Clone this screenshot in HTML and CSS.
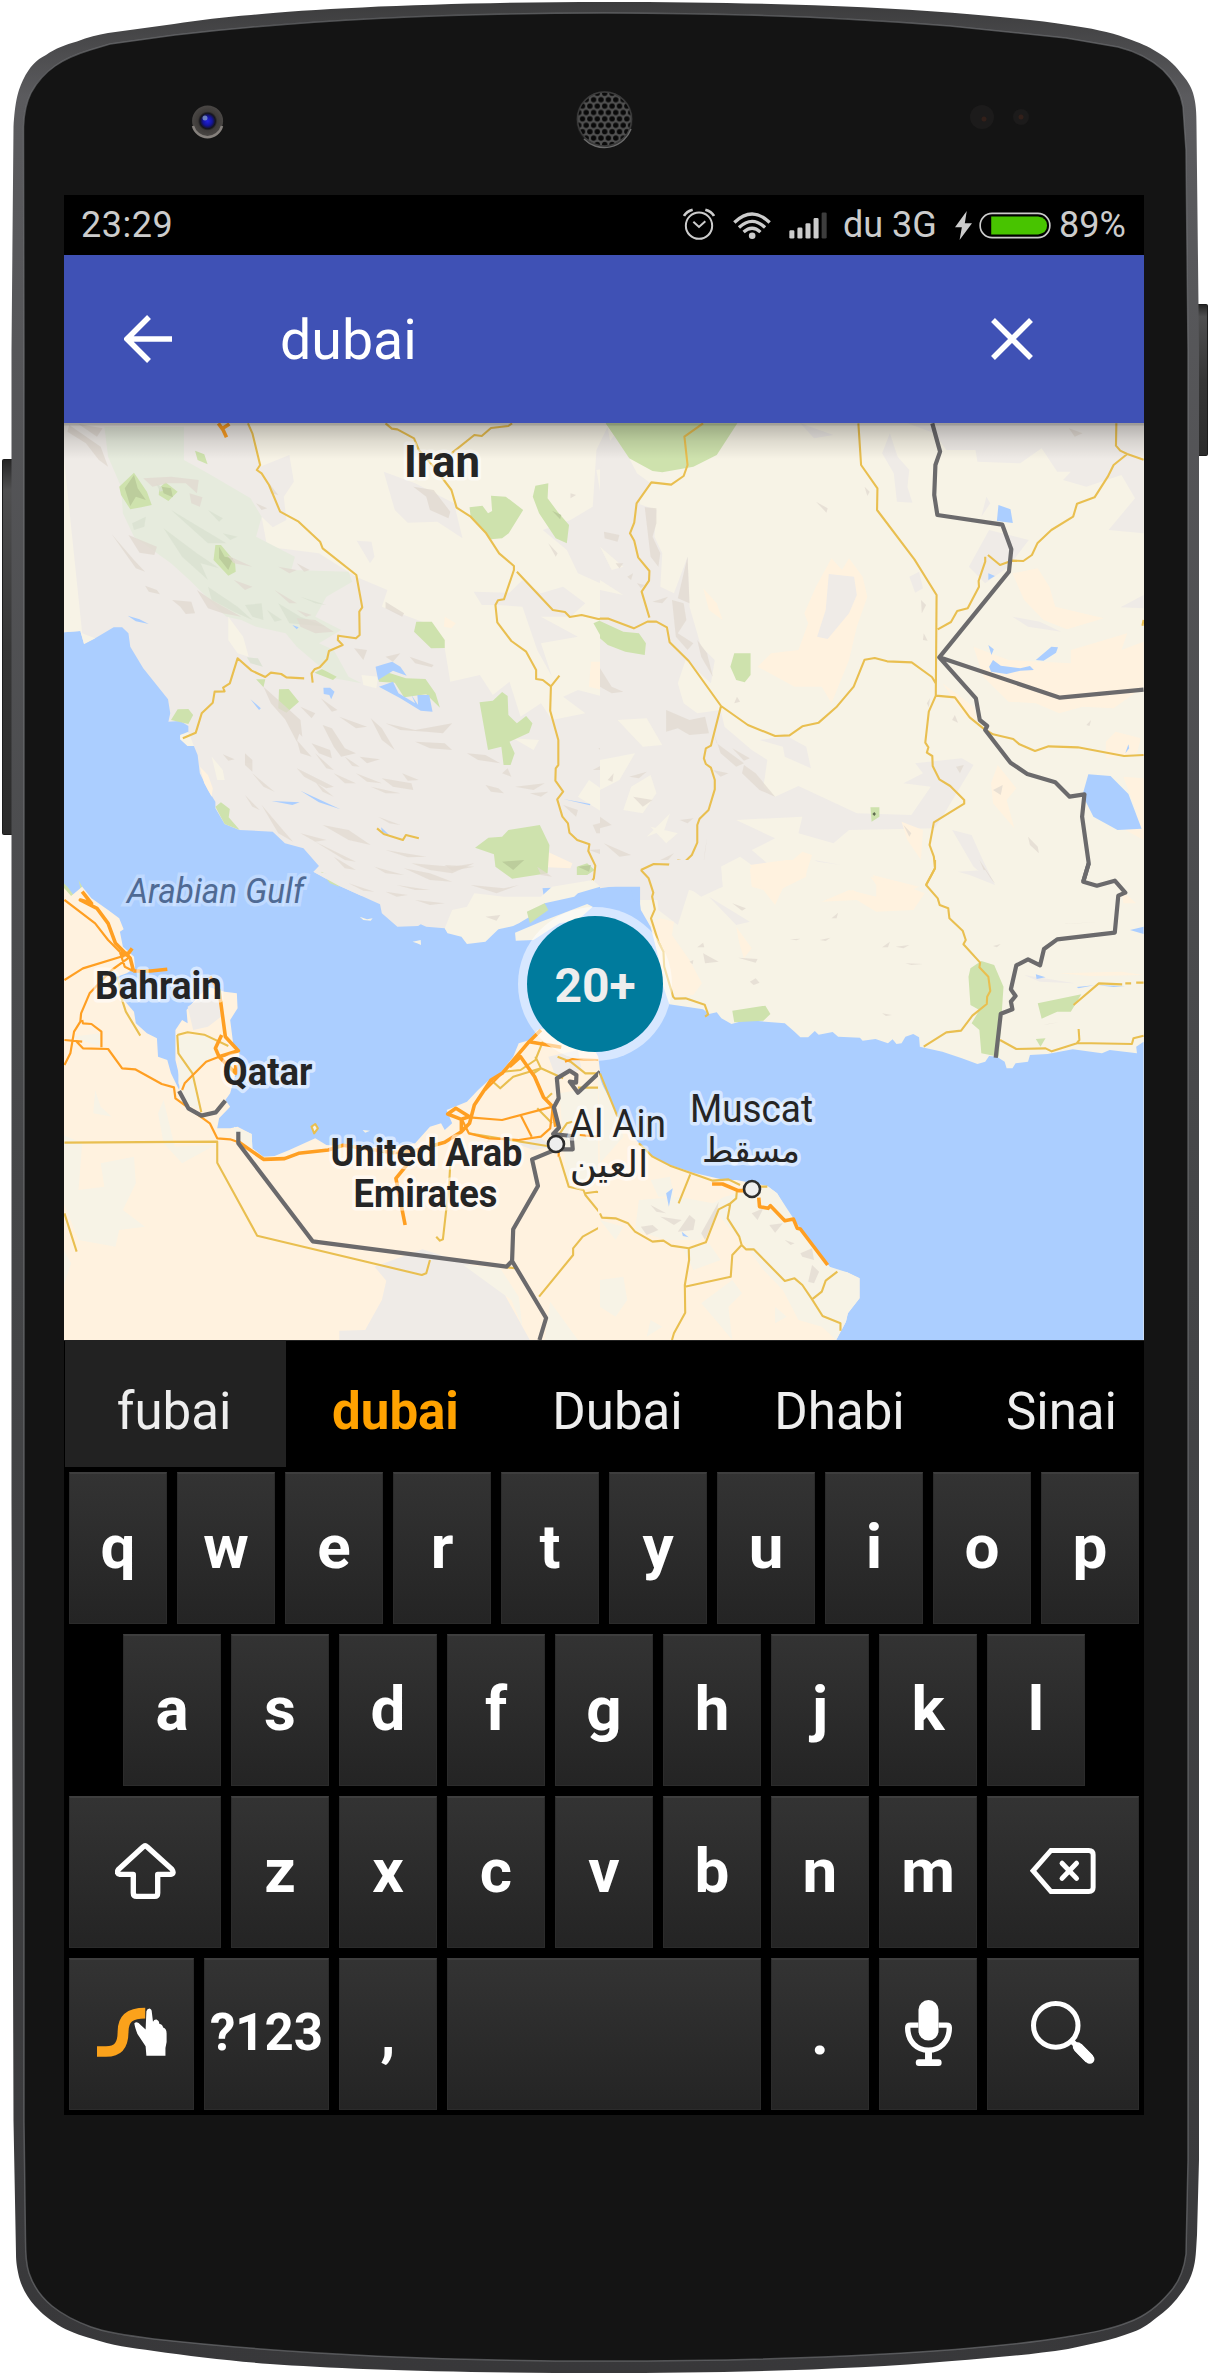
FILE: index.html
```html
<!DOCTYPE html>
<html lang="en">
<head>
<meta charset="utf-8">
<title>Map search</title>
<link rel="stylesheet" href="styles.css">
</head>
<body>
<div class="device">
  <svg class="shell" viewBox="0 0 1210 2375" aria-hidden="true">
    <defs>
      <linearGradient id="rim" x1="0" y1="0" x2="0" y2="1">
        <stop offset="0" stop-color="#3c3c3d"/><stop offset=".04" stop-color="#5b5b5e"/><stop offset=".5" stop-color="#454648"/><stop offset="1" stop-color="#38383a"/>
      </linearGradient>
      <radialGradient id="lens"><stop offset="0" stop-color="#2222e0"/><stop offset=".3" stop-color="#14149a"/><stop offset=".5" stop-color="#15151c"/><stop offset=".62" stop-color="#3e3b39"/><stop offset="1" stop-color="#4a4745"/></radialGradient>
      <linearGradient id="button" x1="0" x2="0" y2="1"><stop offset="0" stop-color="#242424"/><stop offset=".08" stop-color="#4f4f50"/><stop offset=".5" stop-color="#363636"/><stop offset="1" stop-color="#2b2b2b"/></linearGradient>
      <pattern id="mesh" width="7.4" height="12.8" patternUnits="userSpaceOnUse" x="601" y="112.5"><rect width="7.4" height="12.8" fill="#515151"/><g fill="#090909"><circle cx="3.7" cy="6.4" r="2.7"/><circle r="2.7"/><circle cx="7.4" r="2.7"/><circle cy="12.8" r="2.7"/><circle cx="7.4" cy="12.8" r="2.7"/></g></pattern>
    </defs>
    <rect x="2.500" y="459.500" width="12" height="375" rx="1" fill="url(#button)" stroke="#1c1c1c"/>
    <rect x="1196" y="304.500" width="11.500" height="151" rx="1" fill="url(#button)" stroke="#1c1c1c"/>
    <path fill="url(#rim)" d="M13.5 127C15 104 17 93 23 80C30 66 36 60 46 55C56 48 65 45 77 41.5C88 37 98 35 108 33L174 24C200 20 224 17 251 15C320 8 460 2 605 2C750 2 860 6 952 12.700C1000 17 1038 20 1068 25C1090 28 1110 32 1126 38C1140 43 1148 46 1157 52C1167 58 1174 64 1180 72C1187 80 1191 86 1193 93C1196 103 1196.500 112 1196.500 127L1199 350V2160L1197 2235C1196 2250 1196 2260 1193 2270C1190 2280 1187 2285 1182 2292C1175 2302 1168 2309 1160 2315C1151 2322 1144 2328 1133 2332C1110 2341 1090 2344 1068 2349C1030 2355 990 2358 952 2361C850 2370 720 2373 605 2373C450 2373 340 2369 270 2364C230 2361 190 2356 154 2351C132 2348 110 2345 93 2339C79 2335 68 2331 58 2325C49 2319 42 2314 35 2306C27 2297 22 2288 19 2277C17 2268 16 2262 16 2254L13.500 2121L11.500 1500V350Z"/>
    <path fill="#141414" stroke="#77787b" stroke-opacity=".6" stroke-width="1.500" d="M23.500 127C24 113 26 103 31 93C38 80 45 73 55 66C66 58 77 54 90 50L110 44L175 35C320 18 460 13 605 13C750 13 850 18 950 26L1066 38L1118 47C1138 52 1152 60 1163 70C1174 81 1181 93 1183 107L1186 150L1188 350V2160L1186 2254C1184 2270 1179 2282 1170 2292C1159 2305 1146 2316 1129 2322C1109 2330 1089 2333 1066 2337C980 2351 810 2361 605 2361C430 2361 280 2353 154 2339C130 2336 108 2333 91 2327C75 2321 63 2315 52 2306C41 2297 33 2285 29 2273C26 2264 25.500 2254 25.500 2240L24 2121V350Z"/>
    <circle cx="207.600" cy="121" r="15.500" fill="url(#lens)"/>
    <path d="M193 126a15 15 0 0 0 29 0" fill="none" stroke="#85807c" stroke-width="2.500"/>
    <circle cx="205" cy="118" r="2.500" fill="#90acd0" opacity=".7"/>
    <circle cx="604.500" cy="119.500" r="28.500" fill="#1e1e1e"/>
    <circle cx="604.500" cy="119" r="27" fill="url(#mesh)" stroke="#3c3c3c" stroke-width="1.500"/>
    <path d="M584 139a28.500 28.500 0 0 0 47-10" fill="none" stroke="#6a6a6a" stroke-width="1.500"/>
    <circle cx="982" cy="117" r="12" fill="#1c1b1b"/><circle cx="984" cy="119" r="2.500" fill="#33201a"/>
    <circle cx="1021" cy="117" r="8" fill="#1c1b1b"/><circle cx="1021" cy="117" r="2.500" fill="#33201a"/>
  </svg>

  <main class="screen">
    <header class="status">
      <span class="clock">23:29</span>
      <svg class="alarm" viewBox="66 55 96 96"><g fill="none" stroke="#ccc"><circle cx="114" cy="108" r="39.500" stroke-width="6"/><path d="M97 96l17 16 19-17" stroke-width="6"/><path d="M69 79q7-14 26-19M159 79q-7-14-26-19" stroke-width="8"/></g></svg>
      <svg class="wifi" viewBox="215 60 115 86"><g fill="none" stroke="#ccc" stroke-width="10"><path d="M219 94q54-51 107 0M233 109q40-37 79 0M247 123q26-23 51 0"/></g><circle cx="273" cy="134" r="10" fill="#ccc"/></svg>
      <svg class="signal" viewBox="383 65 113 80"><g fill="#ccc"><rect x="384" y="119" width="15" height="25" rx="4"/><rect x="408" y="111" width="15" height="33" rx="4"/><rect x="432" y="98" width="15" height="46" rx="4"/><rect x="456" y="83" width="15" height="61" rx="4"/></g><rect x="480" y="66" width="15" height="78" rx="4" fill="#3d3d3d"/></svg>
      <span class="carrier">du 3G</span>
      <svg class="bolt" viewBox="884 62 52 88"><path fill="#ccc" d="M920 62L884 111h21l-7 39 38-51h-22z"/></svg>
      <svg class="battery" viewBox="956 65 218 80"><rect x="959.500" y="68.500" width="211" height="73" rx="36" fill="none" stroke="#ccc" stroke-width="5"/><path fill="#48c400" d="M993 78H1135Q1162 82 1162 105T1135 132H993Z"/></svg>
      <span class="percent">89%</span>
    </header>

    <div class="appbar">
      <svg class="back" viewBox="0 0 48 48"><path d="M25 2L3 24l22 22M3 24H48" fill="none" stroke="#fff" stroke-width="5.500"/></svg>
      <span class="query">dubai</span>
      <svg class="clear" viewBox="0 0 42 42"><path d="M2 2L40 40M40 2L2 40" fill="none" stroke="#fff" stroke-width="5.500"/></svg>
    </div>

    <svg class="map" viewBox="64 423 1080 917">
      <rect x="64" y="423" width="1080" height="917" fill="#f7f3e6"/>

      <!-- Northern Gulf and western Iran -->
      <g transform="translate(60 420) scale(.36995 .33333)">
        <path class="hills" d="M0 0H505L541 140 620 105 632 185 605 230 612 300 575 322 545 290 560 380 700 400 800 470 885 510 870 560 990 610 1040 685 1055 785 1135 765 1170 825 1215 785 1245 890 1300 850 1330 900 1420 880 1360 830 1400 810 1470 830 1568 800V900L1510 905 1568 990V1070L1480 1120 1430 1080 1400 1130 1500 1200 1568 1210V1440H0V570L30 600 60 640Z"/>
        <path class="hills" d="M875 155L960 190 1065 250 1088 355 1020 305 940 308 905 270ZM802 362L842 365 850 410 838 430ZM1118 515L1215 518 1250 480 1300 520 1360 500 1420 550 1380 590 1300 590 1400 650 1300 670 1330 770 1290 690 1250 560 1180 555 1140 555ZM1305 330L1370 390 1400 460 1460 490 1568 490V220L1510 290 1470 280 1450 150 1500 140 1480 20 1450 90 1440 260 1380 300Z"/>
        <path class="sage" d="M120 20H335V120L400 160 515 235 545 290 530 350 635 410 625 450 780 455 790 485 720 530 690 590 760 630 700 670 740 690 780 770 815 790 740 775 640 680 610 640 530 620 490 600 450 590 350 480 300 430 200 350 170 280 165 200 130 110Z"/>
        <path class="sea" d="M0 638L55 633 65 672 95 655 145 622H168L185 640 190 680 225 745 265 800 292 838 298 880 293 905 325 903 347 918V940L325 945V958L345 978H362L372 1005 378 1060 400 1110 420 1145V1165L445 1212 485 1230 575 1235 608 1270 658 1285 700 1338 685 1355 750 1395 850 1445H0Z"/>
        <path class="cream" d="M0 555L40 610 60 640 95 655 65 672 55 633 0 638ZM325 945L347 935 362 978H345L325 958ZM455 590L495 650 510 710 480 700 455 660ZM815 765L860 770 855 805 820 795ZM1225 955L1295 960 1280 990ZM410 1010L440 1050 445 1080 425 1080Z"/>
        <path class="desert" d="M378 1040L400 1065 413 1105 410 1130 390 1090ZM1318 1295L1385 1330 1380 1345 1318 1342ZM1040 590L1070 610 1058 625 1038 620ZM1435 725H1465L1468 790 1530 800 1500 820 1430 800Z"/>
        <path class="park" d="M160 200L200 158 235 215 248 255 220 262 190 268 165 225ZM268 205L285 187 318 215 293 243 267 225ZM365 92L390 103 399 133 372 120ZM420 375H435L473 425 475 455 455 467 415 420ZM1107 262L1142 257 1157 280 1168 273 1165 227 1205 230 1252 270 1213 340 1195 355 1165 358 1140 325 1110 290ZM1285 197L1320 190 1318 235 1345 275 1376 315 1370 370 1340 355 1295 280 1278 230ZM1475 10H1568V130L1540 110ZM963 605H1005L1040 660V684L1003 685 957 635ZM1442 610L1462 600 1568 640V703L1510 692 1470 665ZM688 758L708 747 748 770 738 780ZM530 778L555 778 550 802ZM592 808L618 807 646 845 612 878 590 865ZM300 900L318 868 347 867 360 885 347 912ZM860 770L880 755 935 775 988 777 1015 820 1027 863 990 823 930 832 905 788 862 785ZM1134 847L1170 842 1195 816 1210 828 1212 885 1235 910 1260 888 1277 910 1268 938 1215 965 1229 1000 1218 1035H1199L1193 980 1157 990ZM420 1160L435 1147 459 1167 456 1192 486 1230 445 1212ZM1122 1283L1158 1253 1195 1250 1212 1230 1297 1215 1323 1275 1318 1360 1222 1376 1177 1340 1173 1303ZM705 1355L740 1370 755 1400 730 1390ZM1397 1340L1425 1330 1445 1350 1425 1365H1397Z"/>
        <path class="sea" d="M853 740L875 733 898 725 920 740 937 767 900 752 860 780ZM862 800L900 785 915 820 960 850 950 825 968 855 966 825 998 825 1007 875 975 872 920 835ZM712 803L730 803 742 815 733 838 728 825 713 822ZM183 587L215 598 240 612 205 604ZM515 838L543 865 538 870ZM572 1143L648 1147 628 1155ZM650 1112L758 1168 700 1147ZM868 1222L890 1245 870 1235ZM1360 1137L1434 1152 1432 1156ZM628 615L645 622 640 628Z"/>
        <path class="mint" d="M280 325L370 400 430 445 380 430 400 480 330 410ZM300 270L390 330 450 370 400 370ZM195 310L232 290 228 320 200 330ZM400 500L480 560 520 600 470 575 410 540ZM500 555L545 550 550 600 520 590ZM590 550L650 590 720 620 620 610ZM650 530L720 555 690 550ZM505 712L535 715 548 740 515 730ZM300 350L350 410 340 420ZM400 270L440 295 430 305ZM440 340L480 350 460 360ZM560 570L600 600 580 605ZM260 190L285 210 270 215Z"/>
        <path class="moss" d="M175 205L200 165 210 205 232 240 205 230 190 258ZM275 200L300 205 305 232 280 220ZM430 380L445 410 468 415 455 450 430 415ZM1330 272L1355 285 1352 298ZM1195 1325L1255 1320 1225 1350ZM1400 1340L1435 1335 1430 1355Z"/>
        <g class="rock">
          <path d="M25 15L110 80 130 140 105 120 70 70 20 35ZM50 12L115 25 100 50ZM225 175L300 170 375 180 370 220 340 190 290 190 250 200ZM350 220L385 232 378 260 355 250ZM140 343L200 420 230 455 205 445 170 390ZM185 345L262 380 255 405 215 398ZM230 497L262 510 270 523 240 515ZM303 540L355 545 365 580 340 582 325 560ZM370 510L410 540 490 590 440 580 400 565ZM450 405L520 440 470 430ZM470 480L520 500 500 510ZM530 250L560 265 545 270ZM565 190L590 225 570 220ZM955 200L1010 210 1055 275 1050 295 1000 270 990 230ZM640 595L690 600 740 635 690 640 650 620ZM880 545L930 580 925 590 880 565ZM795 685L830 690 820 720ZM880 710L920 700 900 725ZM945 710L1010 735 1005 742 960 730ZM640 570L680 585 665 590ZM580 510L640 550 620 550ZM590 440L640 450 620 460ZM640 430L675 450 660 455Z"/>
          <path d="M550 800L600 850 650 900 655 950 610 900 570 850ZM600 880L650 930 640 965ZM650 860L690 880 680 895ZM705 835L750 870 735 875ZM755 890L830 920 800 925ZM710 915L735 925 770 985 800 1000 760 1010 740 980ZM840 895L870 925 905 990 870 960ZM880 910L960 930 1060 910 1035 940 990 935 920 930ZM960 965L1040 970 1060 990 1000 985ZM680 970L730 990 735 1015 700 1000ZM810 1010L865 1018 830 1030ZM640 960L680 1010 650 1000ZM870 1075L950 1090 955 1110 900 1100ZM690 1000L740 1050 720 1045ZM500 1000L520 1020 520 1055 500 1035ZM440 1003L472 1018 455 1022ZM520 1060L580 1115 550 1100ZM640 1045L740 1100 720 1105 660 1070ZM740 1060L800 1090 770 1090ZM500 1125L540 1170 520 1160ZM545 1155L610 1240 630 1265 590 1240ZM690 1085L740 1130 710 1115ZM710 1215L780 1230 840 1275 780 1260ZM860 1190L920 1215 890 1210ZM800 1060L870 1090 830 1085ZM840 1100L920 1120 880 1120ZM925 1060L970 1080 940 1082ZM770 1010L810 1040 790 1038ZM650 1240L720 1260 690 1265ZM690 1265L800 1325 770 1320ZM740 1310L800 1350 770 1345ZM880 1290L990 1310 940 1312ZM950 1330L1060 1340 1120 1330 1060 1360 1000 1350ZM850 1340L930 1365 880 1360ZM850 1400L940 1410 1000 1430 930 1425ZM1050 1385L1190 1410 1110 1410ZM1100 1000L1150 1005 1190 1030 1130 1020ZM1150 1095L1185 1105 1200 1120 1165 1115ZM1230 1100L1310 1090 1280 1110ZM1270 1120L1320 1115 1300 1130ZM1360 1155L1400 1170 1395 1190ZM1440 1215L1490 1200 1480 1240 1450 1240ZM1455 985L1485 980 1470 1000ZM1440 1050L1490 1020 1470 1050ZM1485 1090L1510 1065 1500 1095ZM1470 330L1510 345 1500 365 1470 355ZM1540 850L1560 820 1568 840ZM1430 1290L1500 1285 1480 1310ZM1210 1045L1220 1070 1195 1060ZM1410 1420L1460 1410 1430 1430ZM1320 370L1345 400 1340 410ZM1380 220L1395 225 1380 235Z"/>
        </g>
        <path class="road" d="M508 10L520 40 541 135 532 150 545 160 565 195 595 275 645 305 703 365 710 385 801 465 817 562 809 575 810 645 800 655 752 647 751 660 764 675 727 693 722 718 702 742 688 748 680 760 683 788M332 955L367 938 383 880 413 848 418 815 445 814 441 803 459 790 480 715 518 752 555 771 570 758 598 762 612 772 660 775M880 10L897 26 912 28 957 55 970 90 1010 140 1058 210 1072 263 1110 290 1152 340 1187 400 1227 438V450L1200 538 1184 541 1177 555 1182 607 1220 663 1260 695 1287 750V777L1305 780 1327 799 1350 767M1327 799L1325 872 1347 960V1035L1340 1045 1339 1082 1360 1115 1344 1138 1358 1190 1373 1210 1377 1238 1398 1260 1431 1273 1428 1293 1447 1337 1443 1375 1424 1407 1393 1420M1235 455L1332 570 1365 576 1378 591 1410 585 1455 597 1480 595M1058 100L1120 45 1140 48 1165 24 1212 18 1222 10M857 1225L875 1242 927 1260 935 1245 970 1255"/>
        <path class="highway" d="M428 10L440 28 450 52M440 25L458 12"/>
      </g>

      <!-- Eastern Iran and its borders -->
      <g transform="translate(600 420) scale(.38911 .33333)">
        <path class="hills" d="M0 150L15 80 40 40 75 115 95 160 130 190 95 250 145 270 140 350 160 400 155 500 190 520 225 410 230 560 260 680 295 720 285 790 220 720 200 790 215 850 250 880 310 870 320 920 390 990 430 1020 420 1100 450 1130 510 1098 660 1180 800 1185 850 1100 780 1090 830 1060 810 1030 930 1015 960 1035 880 1190 860 1225 640 1230 600 1270 510 1240 520 1190 350 1200 450 1255 390 1290 440 1340 390 1335 360 1310 310 1340 315 1400 260 1420 200 1400 170 1440H0ZM410 960L480 948 530 980 542 1045 475 1010 470 980ZM515 10L600 45 550 55ZM725 100L745 40 765 110 795 150 790 200 803 248 763 245 755 160ZM790 10H1397V340L1307 330 1375 235 1340 165 1250 200 1190 180 1210 155 1175 155 1135 85 1080 130 970 125 965 90 890 90 860 40ZM1000 330L1102 360 1050 440 990 490 948 440ZM795 470L820 455 830 505 810 518ZM980 290L993 230 1003 250ZM1060 590L1130 605 1185 635 1100 620ZM1338 562L1397 525V565ZM905 1230L955 1245 980 1310 1015 1395 960 1340Z"/>
        <path class="cream" d="M45 900L120 895 160 975 110 980ZM80 1100L130 1065 145 1120 110 1180 60 1170ZM0 1020L90 1000 50 1080 0 1110ZM120 1250L180 1180 165 1230ZM0 380L60 440 30 450ZM0 480L60 525 0 510ZM130 1220L200 1240 170 1270Z"/>
        <path class="desert" d="M595 415L622 450 640 415 675 470 687 530 660 620 640 720 595 850 570 800 500 800 405 740 440 700 510 690 535 610 525 580 555 500ZM1060 460L1125 445 1155 500 1170 560 1295 595 1200 628 1140 600 1090 540ZM960 680L1050 720 1210 730V690L1355 640 1340 690 1397 665V800L1320 865 1240 860 1180 880 1120 850 1050 845 985 770ZM880 790L960 860 970 900 940 890ZM1300 965L1325 935 1390 955 1380 1000 1300 1015ZM1345 1070L1397 1075V1260L1350 1230 1380 1180ZM1022 1035L1070 1105 1045 1140 1065 1225 1010 1150 1005 1090ZM265 505L300 550 315 600 280 570ZM775 1205L830 1230 825 1320 790 1260ZM385 1345L480 1335 520 1295 545 1305 530 1360 470 1400 450 1440 420 1410 390 1400ZM700 1365L820 1400 780 1420 720 1395ZM580 1440L650 1410 700 1440Z"/>
        <path class="hills" d="M588 462L653 470 660 525 640 580 585 657 558 650 580 570Z"/>
        <path class="park" d="M15 10H353L300 105 240 140 160 157 135 153 75 115ZM345 700H387V765L372 787 350 780 335 740ZM0 603L60 635 100 640 118 670 115 705 65 695 20 675 0 655ZM695 1162H718V1190L698 1205Z"/>
        <path class="sea" d="M1024 255L1055 268 1061 309 1020 303ZM998 460L1015 468 998 480ZM998 675L1012 688 1006 705ZM1000 740L1010 720 1030 737 1080 745 1105 738 1115 750 1080 752 1045 762 1005 755ZM1120 720L1160 680 1177 682 1172 698 1140 722ZM1255 1063L1312 1068 1358 1122 1392 1226 1330 1230 1268 1190 1240 1125ZM1350 1000L1358 973 1360 985ZM0 1402L78 1412 85 1440H0Z"/>
        <g class="rock"><path d="M115 262L145 265V310L135 350 155 400 150 440 130 410ZM10 335L50 345 45 365 12 355ZM555 245L585 265 582 278ZM185 540L215 550 222 600 200 640 240 670 225 690 195 650ZM225 410L230 550 200 535ZM135 545L175 530 160 550ZM250 660L275 700 290 770 260 710ZM170 870L230 900 270 890 280 940 230 945 200 925 170 935ZM290 930L300 970 370 1030 350 1040 310 1000ZM340 985L385 1015 370 1022ZM370 1035L400 1060 450 1130 410 1110 365 1060ZM0 745L30 800 60 815 30 820 0 800ZM75 1070L120 1055 100 1075ZM85 1130L135 1140 110 1160ZM10 1270L80 1305 50 1310ZM0 1190L30 1215 0 1225ZM205 1200L240 1195 225 1210ZM155 1320L190 1300 175 1320ZM275 1255L265 1340 270 1290ZM20 1080L35 1060 32 1085ZM1010 1110L1035 1095 1030 1125ZM1100 1250L1125 1280 1128 1300 1105 1275ZM915 1040L935 1035 925 1060ZM780 1215L800 1240 795 1250ZM975 1320L1015 1390 990 1360ZM1205 25L1240 40 1220 50ZM680 200L693 215 687 228ZM825 540L838 555 827 580ZM832 640L842 662 830 660ZM905 900L912 885 920 908ZM1250 915L1262 900 1258 918ZM840 850L848 835 845 862ZM70 470L85 460 80 480ZM95 490L115 495 105 505ZM40 430L60 430 50 445ZM290 1050L330 1060 310 1070ZM345 850L352 830 360 845Z"/></g>
        <path class="road" d="M265 10L217 50 225 135 215 168 183 194 132 187 94 250 88 308 77 340 88 362 98 412 127 453 126 482 107 515 127 593M0 596H22L87 625 122 605H145L172 622 179 667 228 723 311 858 380 915 450 948 487 946 520 919 562 908 607 862 652 800 680 719 706 714 738 724 801 727 853 771 863 790M664 10L671 135 713 205 712 270 808 418 865 525 863 827 845 875 836 968 844 982 840 998 854 1008 855 1038 872 1078 900 1098 936 1140V1151L858 1207 847 1275 858 1310 861 1345 838 1395M863 827L912 832 950 892 985 925 1010 943 1062 957 1078 973 1118 993 1153 979 1228 982 1347 1008 1397 1005M1327 10L1326 77 1337 92 1355 102 1397 119M1355 102L1320 135 1305 170 1271 232 1226 251 1216 290 1160 330 1124 370 1110 405 1088 423 1058 422 1028 435 997 405M990 410V425L973 483 974 500 945 565 918 573 902 606 868 628M311 858L285 977 272 985 267 1015 272 1032 285 1043 295 1080V1108L279 1170 256 1196 250 1215V1268L236 1305 218 1325 200 1322 185 1334 138 1332 105 1350M1397 600L1394 617"/>
        <path class="border" d="M854 10L874 95 862 135 859 225 867 285 1034 314 1057 388 1051 455 872 712 1182 833 1397 809M872 712L966 835 976 900 995 918 990 930 1055 1028 1098 1062 1170 1087 1207 1130 1245 1123 1239 1190 1256 1330 1242 1385"/>
        <path d="M700 1182l5-6 4 6-4 6z" fill="#5e6b50"/>
      </g>

      <!-- Southern Gulf, Qatar and the Emirates -->
      <g transform="translate(60 860) scale(.36995 .33333)">
        <path class="sea" d="M0 110H750L1400 80H1568V1480H0Z"/>
        <path class="hills" d="M685 35L750 75 865 133 870 160 912 200 968 198 975 193 990 200 1040 205 1048 220 1150 160 1240 190 1310 130 1300 50 1200 60 800 50Z"/>
        <path class="cream" d="M1040 205L1048 220 1085 230 1100 252 1150 245 1185 208 1225 198 1240 190 1270 170 1262 155 1310 130 1390 110 1400 100 1460 80 1440 60 1330 80 1300 110 1200 110 1120 100 1100 140 1060 150ZM1230 218L1300 185 1425 132 1440 140 1400 180 1350 190 1280 240 1232 242ZM810 170L830 178 845 175 840 182 820 180ZM953 245L975 240 976 255 965 250ZM818 810L838 812 825 818ZM680 800L690 792 697 805 687 820Z"/>
        <path class="park" d="M1262 155L1310 130 1320 150 1270 190ZM0 60L20 80 40 110 60 105 50 60 60 80 85 130 30 130 0 110Z"/>
        <path class="desert" d="M0 70L30 108 60 80 85 115 130 150 160 175 172 208 162 215 170 260 200 290 203 325 180 340 155 350 165 410 200 455 205 490 235 520 262 535 265 590 290 600 300 640 322 690 325 660 312 600V510L330 480 345 490 342 450 365 420 400 380 445 395 478 400 480 445 460 480 468 550 485 580 480 620 460 700 447 720 460 740 430 775 425 805 460 805 480 800 518 822 520 865 550 890 580 888 620 870 690 835 720 855 800 862 880 862 960 850 1000 800 1030 790 1040 810 1060 790 1045 750 1100 725 1130 690 1165 655 1190 640 1225 590 1240 550 1270 540 1290 510 1400 480 1455 590 1460 635 1470 680 1505 770 1568 860V1480H0Z"/>
        <path class="hills" d="M345 440L400 400 430 410 435 470 400 500 360 510ZM850 1220L980 1168 1110 1215 1195 1250 1205 1310 1270 1440H755V1412L825 1410 870 1320 882 1262ZM1230 850L1300 835 1330 860 1280 870ZM1320 590L1400 570 1410 630 1340 650Z"/>
        <path class="cream" d="M0 820L60 850 50 990 120 980 110 910 200 890 205 970 170 1050 230 1100 160 1110 150 1160 50 1140 0 1000ZM95 690L110 740 140 770 90 760ZM280 720L310 860 420 855 330 910 280 850 265 760ZM320 530L400 525 440 570 400 600 360 650 380 750 345 735 320 670ZM1090 1215L1190 1225 1240 1310 1250 1400 1220 1320ZM1350 700L1450 680 1500 770 1500 900 1440 960 1370 970ZM1510 1040L1568 1080V1150ZM1325 1325L1310 1440H1400ZM0 1150L30 1210 0 1310ZM30 530L110 520 110 560ZM1480 1220L1568 1170V1190ZM470 800L518 822 520 865 480 850Z"/>
        <path class="rock" d="M930 25L1000 40 1060 65 1000 60ZM1040 15L1120 20 1060 32ZM910 75L1000 90 960 90ZM780 70L850 95 820 92ZM1110 75L1200 85 1240 75 1180 100ZM1150 170L1190 165 1180 182ZM960 120L1040 130 1000 135ZM1290 20L1330 50 1300 45ZM880 95L940 105 910 110ZM1380 250L1400 240 1420 250Z"/>
        <path class="road" d="M12 848L425 845V908L533 1127 978 1245 990 1240 1000 1200M12 1060L45 1175M317 525L345 517 390 524 455 558M317 525L320 580 358 640 382 757M155 350L165 410 178 455 217 527M1055 910L1052 970 1035 1138 1027 1142 1017 1130M1350 890L1375 980 1415 990 1420 1005 1470 1073 1505 1077 1535 1090 1568 1125M1420 1000L1450 995 1490 1005 1495 980M1478 1090L1413 1130 1387 1165V1185L1295 1310M1165 660L1190 685 1225 650 1300 625 1360 655M1305 545L1285 600 1245 630 1200 635M1465 660L1505 770M1460 683H1400M1285 590L1300 625 1280 640M1345 590L1380 605 1420 640 1460 640M1105 820L1300 855 1330 860M1290 745L1330 790M1330 700L1310 720M1345 830L1370 790 1385 785M1195 1220L1230 1225M680 800L690 792 697 805 687 820Z"/>
        <path class="highway thin" d="M12 120L95 190 130 240 175 290M12 360L62 325 180 285M12 540L60 545M190 290L140 330 80 400 57 460 55 485 38 515 28 580 12 615M60 480L62 490 85 492 112 515V562M45 545L62 565 130 567 168 625 203 628 275 672 308 682 312 715 405 790 425 835 460 838 490 850M160 270L175 320 198 333M330 690L337 670 395 605 430 590M1085 775L1105 820 1160 835 1240 840 1300 830 1325 805 1332 740 1195 780 1107 772M1245 765L1275 830M1405 825L1450 830 1500 780 1568 740M1365 605L1385 597 1455 600M1348 868V890M1150 690L1230 600"/>
        <path class="highway" d="M60 95L85 130 55 120 100 145 130 190 150 250 190 295 198 330M165 280H185L195 265M198 333H245L290 328M405 350L430 390 447 530 482 572 430 590 420 565 437 525M430 590L475 640V615M482 845L550 898 607 896 645 880 725 870 765 856 900 878 960 872 1040 847 1085 815 1107 790 1120 735 1165 660 1195 640 1268 545 1355 562M1107 770L1070 745 1048 762 1085 778ZM1215 620L1245 590 1283 650 1307 712 1332 740 1340 800M1085 778L1085 815M945 905L908 955 933 1095M1268 545L1300 510"/>
        <path class="border" d="M322 693L347 745 382 767 421 757 447 722M482 815V850L683 1144 1207 1220 1222 1203 1225 1108 1292 978 1276 898 1341 868H1386L1383 828 1333 822 1349 803 1335 742 1348 715 1343 655 1378 632 1396 645 1395 668 1378 665 1400 698 1460 635M1222 1203L1314 1374 1296 1440"/>
      </g>

      <!-- Gulf of Oman -->
      <g transform="translate(600 860) scale(.38911 .33333)">
        <path class="sea" d="M0 85L80 92 88 123 102 125 105 150 130 200 150 290 160 370 178 433 265 448 280 462 300 457 312 475 338 492 375 480 475 490 500 515 515 532H535L552 513 562 524 598 516 612 530 668 533 675 542 708 537 740 550 752 538 762 552 775 550 785 530 805 522 820 532 822 560 880 575 930 595 970 612 990 605 1000 588 1020 590 1040 605 1045 625H1060L1068 610 1100 605 1105 585 1150 582 1215 568 1290 580 1310 570 1380 580 1378 560 1397 545V1440H0Z"/>
        <path class="desert" d="M-5 635L10 690 45 770 100 850 135 890 180 915 240 938 320 960H350L430 978 455 1000 475 1040 505 1090 590 1220 610 1237H635L667 1255V1315L637 1360 632 1385 607 1440H-5Z"/>
        <path class="cream" d="M-5 650L40 750 60 830 0 910ZM100 1020L200 1010 290 1030 320 1010 430 978 455 1000 505 1090 590 1220 635 1237 667 1255V1315L637 1360 632 1385 607 1440 570 1400 510 1380 470 1290 420 1230 370 1150 300 1060 260 1140 170 1140 90 1110ZM215 1170L280 1150 310 1200 240 1230ZM260 1330L340 1260 365 1300 330 1340 340 1440 290 1370ZM0 1260L60 1250 70 1320 40 1370 0 1340ZM130 960L180 950 190 1010 150 1010ZM130 1380L160 1400 120 1430ZM0 1080L60 1100 40 1140ZM450 1340L480 1370 450 1390Z"/>
        <path class="hills" d="M180 0H310L315 80 260 110 230 85 200 195 150 150 145 80 170 60ZM280 110L385 185 350 195ZM920 35L990 30 1015 75 950 45ZM0 0H105L90 70 0 85ZM550 0L620 15 560 5ZM1090 345L1220 370 1130 365Z"/>
        <path class="desert" d="M130 190L155 175 190 185 185 225 230 300 262 370 240 405 195 410 170 350 150 290ZM385 15L480 0 530 0 530 50 470 85 450 135 420 90ZM570 125L640 90 710 110V75L695 50 790 80 835 100 805 150 710 155 660 120ZM350 200L390 265 370 295 358 250ZM1340 90L1378 130 1345 130ZM1180 340L1340 335 1397 345 1260 348Z"/>
        <path class="park" d="M952 325L980 303 1013 315 1037 380 1025 590 980 580 975 510 955 490 975 450 952 435 947 350ZM340 452L425 437 438 462 420 482 345 487ZM1125 430L1237 403 1210 455 1175 455 1135 476ZM1120 537L1145 535 1132 560Z"/>
        <path class="sea" d="M1362 210L1397 200V222ZM1120 343L1145 352 1122 357ZM1225 381L1270 376 1230 385ZM1280 376L1350 378 1320 381ZM170 1000L187 985 177 1040ZM210 1115L228 1132 213 1128Z"/>
        <path class="rock" d="M105 1100L135 1095 150 1110 120 1125ZM155 1070L210 1080 190 1095ZM230 1065L245 1080 240 1110 200 1115ZM260 1120L305 1025 300 1060 270 1140ZM130 1035L170 1060 145 1055ZM390 1060L420 1045 405 1080ZM435 1095L470 1090 450 1118ZM515 1180L545 1165 550 1200 520 1190ZM545 1215L563 1235 550 1270 535 1265ZM475 1140L500 1150 490 1155ZM265 280L305 305 270 310ZM355 293L405 297 400 308ZM725 262L745 245 740 262ZM760 260L795 255 780 265ZM385 365L400 355 410 368 395 375ZM250 262L265 248 268 262ZM595 175L612 158 608 175ZM565 240L592 233 580 243ZM725 460L750 465 735 468ZM340 130L375 145 365 152ZM785 310L830 312 800 315ZM1140 495L1180 487 1150 492ZM1190 192L1280 187 1220 190ZM1010 258L1030 252 1020 262ZM488 238L515 236 505 241ZM230 305L240 300 238 313Z"/>
        <path class="road" d="M861 0V25L838 75 868 115 873 135 895 145 898 175 932 212 940 240 934 253 977 308 975 322 998 350 1003 393 995 410 994 432 957 467 928 512 890 517 832 560M105 30L125 55 137 98 134 110 141 148 131 175 150 245 163 275 165 320 188 410 193 416 220 415 269 434 278 463 270 470M1028 540L1070 567 1145 565 1161 574 1228 549 1367 552 1371 535 1397 527M1230 507L1232 540 1225 550M1217 435L1282 370 1342 373M1350 370H1365M1378 368H1397M0 1060L5 1073 40 1075 72 1090 90 1115 135 1145 163 1142 183 1157 228 1165 272 1147 305 1048 335 1030 350 1015 352 990M228 1165L229 1200 218 1275 219 1358 190 1420 185 1440M218 1280L336 1250 340 1185 364 1155 375 1168H395L475 1263 500 1255 520 1275 545 1318 572 1368 618 1390V1412M545 1318L570 1295 580 1262 610 1235M364 1155L358 1130 328 1075 335 1030M0 640L45 770M100 850L135 890 180 917 290 962 330 958 360 975M232 943L202 1030M410 980H430"/>
        <path class="highway" d="M288 972H315L355 992H370M408 1013L410 1040 432 1045 438 1037 475 1082 497 1077 507 1105 515 1107 585 1215"/>
        <path class="border" d="M1256 10L1242 65 1277 77 1323 62 1350 98 1332 107 1323 218 1175 238 1141 267 1131 316 1100 298 1070 316 1056 388 1068 408 1056 425 1060 448 1030 461 1017 593"/>
      </g>

      <g class="halo bold">
        <text x="404" y="477" font-size="45" textLength="76" lengthAdjust="spacingAndGlyphs">Iran</text>
        <text x="95" y="999" font-size="38" textLength="127" lengthAdjust="spacingAndGlyphs">Bahrain</text>
        <text x="222.500" y="1085" font-size="38" textLength="90" lengthAdjust="spacingAndGlyphs">Qatar</text>
        <text x="330.500" y="1166" font-size="38" textLength="192" lengthAdjust="spacingAndGlyphs">United Arab</text>
        <text x="353.500" y="1207" font-size="38" textLength="144" lengthAdjust="spacingAndGlyphs">Emirates</text>
      </g>
      <text class="water" x="127" y="902.500" font-size="35" textLength="177" lengthAdjust="spacingAndGlyphs">Arabian Gulf</text>
      <g class="halo">
        <text x="570" y="1137" font-size="38" textLength="96" lengthAdjust="spacingAndGlyphs">Al Ain</text>
        <text x="690" y="1122" font-size="38" textLength="123" lengthAdjust="spacingAndGlyphs">Muscat</text>
        <text class="arabic" x="609" y="1177" font-size="37">العين</text>
        <text class="arabic" x="751" y="1162" font-size="34">مسقط</text>
      </g>
      <g fill="#eee" stroke="#2d2d2d" stroke-width="2.600"><circle cx="556" cy="1144" r="8"/><circle cx="752" cy="1189" r="8"/></g>

      <circle cx="595" cy="984" r="77" fill="#fff" fill-opacity=".52"/>
      <circle cx="595" cy="984" r="68" fill="#007b9d"/>
      <text class="count" x="595" y="1001.500" font-size="48" text-anchor="middle">20+</text>
    </svg>

    <section class="keyboard">
      <div class="suggestions">
        <span class="word pressed">fubai</span><span class="word best">dubai</span><span class="word">Dubai</span><span class="word">Dhabi</span><span class="word">Sinai</span>
      </div>
      <div class="keys">
        <div class="row"><b class="key">q</b><b class="key">w</b><b class="key">e</b><b class="key">r</b><b class="key">t</b><b class="key">y</b><b class="key">u</b><b class="key">i</b><b class="key">o</b><b class="key">p</b></div>
        <div class="row home"><b class="key">a</b><b class="key">s</b><b class="key">d</b><b class="key">f</b><b class="key">g</b><b class="key">h</b><b class="key">j</b><b class="key">k</b><b class="key">l</b></div>
        <div class="row">
          <b class="key wide"><svg class="shift" viewBox="295 168 160 148" preserveAspectRatio="none"><path fill="none" stroke="#fff" stroke-width="14" stroke-linejoin="round" d="M369 178Q374 173 379 178L444 237Q452 249 441 251H407V300Q407 309 399 309H352Q343 309 343 300V251H308Q297 249 304 238Z"/></svg></b>
          <b class="key">z</b><b class="key">x</b><b class="key">c</b><b class="key">v</b><b class="key">b</b><b class="key">n</b><b class="key">m</b>
          <b class="key wide"><svg class="erase" viewBox="1101 182 173 121" preserveAspectRatio="none"><g fill="none" stroke="#fff" stroke-width="13"><path d="M1156 188.500H1255Q1266.500 188.500 1266.500 200V286Q1266.500 296.500 1255 296.500H1156L1109 242Z"/><path d="M1185 222L1223 262M1223 222L1185 262" stroke-linecap="round"/></g></svg></b>
        </div>
        <div class="row">
          <b class="key mid"><svg class="swype" viewBox="249 602 180 134" preserveAspectRatio="none"><path d="M249 719H272C306 719 316 698 316 667C316 632 334 618 373 618" fill="none" stroke="#fba21b" stroke-width="28"/><path fill="#fff" d="M376 613Q378 606 384 606Q390 607 390 616L393 641Q396 634 402 635Q410 638 409 646Q418 648 419 656Q428 658 428 672V694L425 710V730H376L374 705 353 673Q346 655 345 645Q352 637 362 650L374 661Z"/></svg></b>
          <b class="key mid symbols">?123</b>
          <b class="key">,</b>
          <b class="key space"></b>
          <b class="key">.</b>
          <b class="key"><svg class="mic" viewBox="776 582 122 174" preserveAspectRatio="none"><g fill="#fff"><rect x="811" y="582" width="52" height="107" rx="26"/><rect x="828" y="714" width="18" height="30"/><rect x="804" y="738" width="67" height="18" rx="8"/></g><path fill="none" stroke="#fff" stroke-width="14" d="M811 648H790Q783 648 783 655C783 693 808 714 837 714C866 714 891 693 891 655Q891 648 884 648H863"/></svg></b>
          <b class="key wide"><svg class="find" viewBox="1104 586 168 168" preserveAspectRatio="none"><g fill="none" stroke="#fff"><circle cx="1168" cy="650" r="57.500" stroke-width="13"/><path d="M1206 688L1222 704" stroke-width="14"/><path d="M1225 707L1255 738" stroke-width="26" /><path d="M1224 706L1256 739" stroke-width="24" stroke-linecap="round"/></g></svg></b>
        </div>
      </div>
    </section>
  </main>
</div>
</body>
</html>
```
FILE: styles.css
```css
* { box-sizing: border-box; }
body { margin: 0; background: #fff; font-family: Roboto, "Liberation Sans", sans-serif; }
svg { display: block; flex: none; }

.device { position: relative; width: 1210px; height: 2375px; padding: 195px 66px 0 64px; overflow: hidden; }
.shell { position: absolute; inset: 0; width: 1210px; height: 2375px; }
.screen { position: relative; width: 1080px; height: 1920px; background: #000; overflow: hidden; }

.status { display: flex; align-items: center; height: 60px; padding: 0 18px 0 17px; color: #ccc; font-size: 36px; line-height: 62px; }
.clock { margin-right: auto; letter-spacing: .5px; }
.alarm { width: 32px; height: 32px; margin-top: -3px; }
.wifi { width: 38px; height: 29px; margin-left: 18px; }
.signal { width: 38px; height: 27px; margin-left: 18px; }
.carrier { width: 97px; margin-left: 16px; white-space: nowrap; }
.bolt { width: 17px; height: 29px; margin-left: 15px; }
.battery { width: 72px; height: 27px; margin-left: 7px; }
.percent { width: 67px; margin-left: 8px; white-space: nowrap; }

.appbar { display: flex; align-items: center; height: 168px; padding: 0 111px 0 60px; background: #3f51b5; color: #fff; }
.back { width: 48px; height: 48px; }
.query { margin: 4px auto 0 108px; font-size: 55.5px; line-height: 60px; }
.clear { width: 42px; height: 42px; }

.map { width: 1080px; height: 917px; }
.keyboard { height: 775px; border-top: 1px solid #222; }
.screen::after { content: ""; position: absolute; top: 228px; left: 0; width: 100%; height: 36px; background: linear-gradient(rgba(0,0,0,.34) 0, rgba(0,0,0,.34) 2px, rgba(0,0,0,.24) 3px, rgba(0,0,0,.1) 50%, transparent); }
.map path { vector-effect: non-scaling-stroke; stroke-linejoin: round; }
.hills { fill: #efebe7; }
.sage { fill: #e6ebdd; }
.mint { fill: #d9e1d1; opacity: .8; }
.moss { fill: #bccd9c; }
.cream { fill: #f7f3e6; }
.desert { fill: #fff2df; }
.park { fill: #cee2ad; }
.sea { fill: #abceff; }
.rock { fill: #e1d9d0; opacity: .75; }
.road { fill: none; stroke: #e9bf50; stroke-width: 2.1; }
.highway { fill: none; stroke: #ff9f22; stroke-width: 3.6; }
.highway.thin { stroke-width: 2.2; }
.border { fill: none; stroke: #6b6a6c; stroke-width: 4.2; }
.halo text { fill: #252525; stroke: rgba(255,255,255,.55); stroke-width: 7px; stroke-linejoin: round; paint-order: stroke; }
.bold text, .count { font-weight: 700; }
.water { fill: #4f6a94; font-style: italic; stroke: rgba(255,255,255,.25); stroke-width: 7px; paint-order: stroke; }
.halo .arabic { font-family: "DejaVu Sans", sans-serif; text-anchor: middle; }
.count { fill: #eee; }

.suggestions { display: flex; height: 126px; padding-left: 1px; overflow: hidden; }
.word { flex: none; width: 222px; padding: 8px 3px 0 0; color: #eee; font-size: 51px; line-height: 126px; height: 126px; text-align: center; }
.pressed { width: 221px; background: #222; }
.best { color: #ffa200; font-weight: 700; }

.keys { display: flex; flex-direction: column; gap: 10px; padding: 5px; }
.row { display: flex; justify-content: center; gap: 10px; height: 152px; }
.key { display: flex; align-items: center; justify-content: center; width: 98px; height: 152px; padding-bottom: 4px; border: 1px solid #2b2b2b; border-top: 2px solid #3e3e3e; background: linear-gradient(#333, #242424); color: #fff; font-size: 62px; font-weight: 700; line-height: 1; }
.wide { width: 152px; }
.mid { width: 125px; }
.space { width: 314px; }
.symbols { font-size: 51px; }
.shift { width: 61px; height: 56px; }
.erase { width: 66px; height: 46px; }
.swype { width: 70px; height: 51px; }
.mic { width: 47px; height: 66px; }
.find { width: 65px; height: 64px; }
```
